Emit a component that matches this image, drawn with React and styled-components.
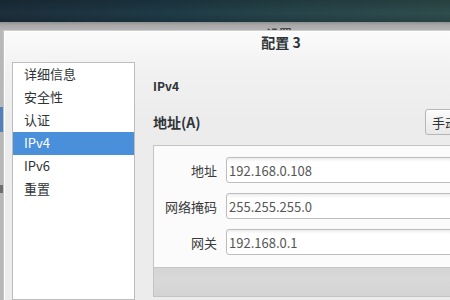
import React from "react";
import styled, { createGlobalStyle } from "styled-components";

const Global = createGlobalStyle`
  html, body { margin: 0; padding: 0; }
  body {
    width: 450px; height: 300px; overflow: hidden;
    font-family: "Noto Sans CJK SC", "DejaVu Sans", sans-serif;
    color: #2e3436;
  }
`;

const Screen = styled.div`
  width: 450px; height: 300px; overflow: hidden;
  display: flex; flex-direction: column;
  background: #bababa;
`;

const TopBand = styled.div`
  height: 22px; flex-shrink: 0;
  background:
    linear-gradient(180deg, rgba(0,0,0,0.18) 0%, rgba(0,0,0,0) 60%, rgba(0,0,0,0.15) 100%),
    linear-gradient(90deg, #1c2f3b 0%, #1e3a46 35%, #27454b 65%, #2f4d4d 100%);
`;

const ParentStrip = styled.div`
  height: 8px; flex-shrink: 0; overflow: hidden;
  display: flex; align-items: flex-start;
  padding-left: 266px;
  background: linear-gradient(180deg, #8f9090 0%, #a9a9a9 40%, #b3b3b3 100%);
`;

const ParentTitle = styled.span`
  display: block;
  margin-top: 5px;
  height: 3px; overflow: hidden;
  font-size: 13px; line-height: 13px; font-weight: 700;
  color: #4a4a4a; white-space: nowrap;
`;

const Body = styled.div`
  flex: 1; min-height: 0;
  display: flex; overflow: hidden;
`;

const LeftEdge = styled.div`
  width: 3px; flex-shrink: 0;
  display: flex; flex-direction: column;
  background: #b8b8b8;
`;

const EdgeGap = styled.div`
  height: ${(p) => p.$h}px; flex-shrink: 0;
`;

const EdgeMark = styled.div`
  height: ${(p) => p.$h}px; flex-shrink: 0;
  background: ${(p) => p.$c};
`;

const Dialog = styled.div`
  width: 554px; flex-shrink: 0;
  border-left: 1px solid #c2c2c2;
  border-top: 1px solid #cfcfcf;
  box-shadow: inset 1px 1px 0 #ffffff;
  background: linear-gradient(180deg, #fbfbfb 0%, #f1f1f1 40px, #ececec 90px, #ececec 100%);
  display: flex; flex-direction: column;
`;

const Title = styled.div`
  height: 23px; line-height: 22px;
  text-align: center;
  font-size: 14px; font-weight: 700; color: #2e3436;
`;

const Content = styled.div`
  flex: 1; margin-top: 8px;
  display: flex;
  padding: 0 9px 0 8px;
`;

const Sidebar = styled.div`
  width: 121px; flex-shrink: 0;
  border: 1px solid #bdbdbd;
  background: #ffffff;
  display: flex; flex-direction: column;
`;

const SideItem = styled.div`
  height: 23px; line-height: 22px;
  padding-left: 11px;
  font-size: 13px;
  color: ${(p) => (p.$active ? "#ffffff" : "#2e3436")};
  background: ${(p) => (p.$active ? "#4a8fd9" : "transparent")};
`;

const Main = styled.div`
  flex: 1; margin-left: 18px;
  display: flex; flex-direction: column;
`;

const SectionHead = styled.div`
  margin-top: 16px;
  height: 16px; line-height: 16px;
  font-size: 12px; font-weight: 700; color: #2e3436;
`;

const MethodRow = styled.div`
  margin-top: 15px;
  height: 26px;
  display: flex; align-items: center; justify-content: space-between;
`;

const MethodLabel = styled.div`
  font-size: 14px; font-weight: 700; color: #2e3436;
`;

const ComboButton = styled.div`
  width: 108px; height: 24px;
  border: 1px solid #b6b6b6; border-radius: 3px;
  background: linear-gradient(180deg, #fbfbfb 0%, #e8e8e8 100%);
  box-shadow: inset 0 1px 0 #ffffff;
  display: flex; align-items: center; justify-content: space-between;
  padding: 0 8px 0 6px;
  font-size: 13px; color: #2e3436;
`;

const Panel = styled.div`
  margin-top: 10px;
  border: 1px solid #c4c4c4;
  background: #fbfbfb;
  display: flex; flex-direction: column;
`;

const Form = styled.div`
  padding: 11px 0 12px 0;
  display: flex; flex-direction: column; gap: 10px;
`;

const FieldRow = styled.div`
  display: grid;
  grid-template-columns: 63px 1fr;
  column-gap: 9px;
  align-items: center;
  padding-right: 10px;
`;

const FieldLabel = styled.label`
  text-align: right;
  font-size: 13px; color: #3a3a3a;
  white-space: nowrap;
`;

const FieldInput = styled.input`
  box-sizing: border-box;
  height: 26px; width: 100%;
  border: 1px solid #bdbdbd; border-radius: 3px;
  background: linear-gradient(180deg, #ececec 0px, #ffffff 4px, #ffffff 100%);
  padding: 0 2px;
  font-family: "Noto Sans CJK SC", "DejaVu Sans", sans-serif;
  font-size: 13px; color: #555555;
  outline: none;
`;

const ToolBar = styled.div`
  height: 28px;
  border-top: 1px solid #c6c6c6;
  background: linear-gradient(180deg, #d4d4d4 0%, #d9d9d9 40%, #d3d3d3 100%);
`;

const sideItems = ["详细信息", "安全性", "认证", "IPv4", "IPv6", "重置"];
const fields = [
  ["地址", "192.168.0.108"],
  ["网络掩码", "255.255.255.0"],
  ["网关", "192.168.0.1"],
];

export default function App() {
  return (
    <>
      <Global />
      <Screen>
        <TopBand />
        <ParentStrip>
          <ParentTitle>设置</ParentTitle>
        </ParentStrip>
        <Body>
          <LeftEdge>
            <EdgeGap $h={77} />
            <EdgeMark $h={25} $c="#4f82bd" />
            <EdgeGap $h={53} />
            <EdgeMark $h={8} $c="#6e6e6e" />
          </LeftEdge>
          <Dialog>
            <Title>配置 3</Title>
            <Content>
              <Sidebar>
                {sideItems.map((s) => (
                  <SideItem key={s} $active={s === "IPv4"}>
                    {s}
                  </SideItem>
                ))}
              </Sidebar>
              <Main>
                <SectionHead>IPv4</SectionHead>
                <MethodRow>
                  <MethodLabel>地址(A)</MethodLabel>
                  <ComboButton>
                    <span>手动</span>
                    <svg width="8" height="5" viewBox="0 0 8 5">
                      <path d="M0 0 L8 0 L4 5 Z" fill="#555" />
                    </svg>
                  </ComboButton>
                </MethodRow>
                <Panel>
                  <Form>
                    {fields.map(([l, v]) => (
                      <FieldRow key={l}>
                        <FieldLabel>{l}</FieldLabel>
                        <FieldInput readOnly value={v} />
                      </FieldRow>
                    ))}
                  </Form>
                  <ToolBar />
                </Panel>
              </Main>
            </Content>
          </Dialog>
        </Body>
      </Screen>
    </>
  );
}
